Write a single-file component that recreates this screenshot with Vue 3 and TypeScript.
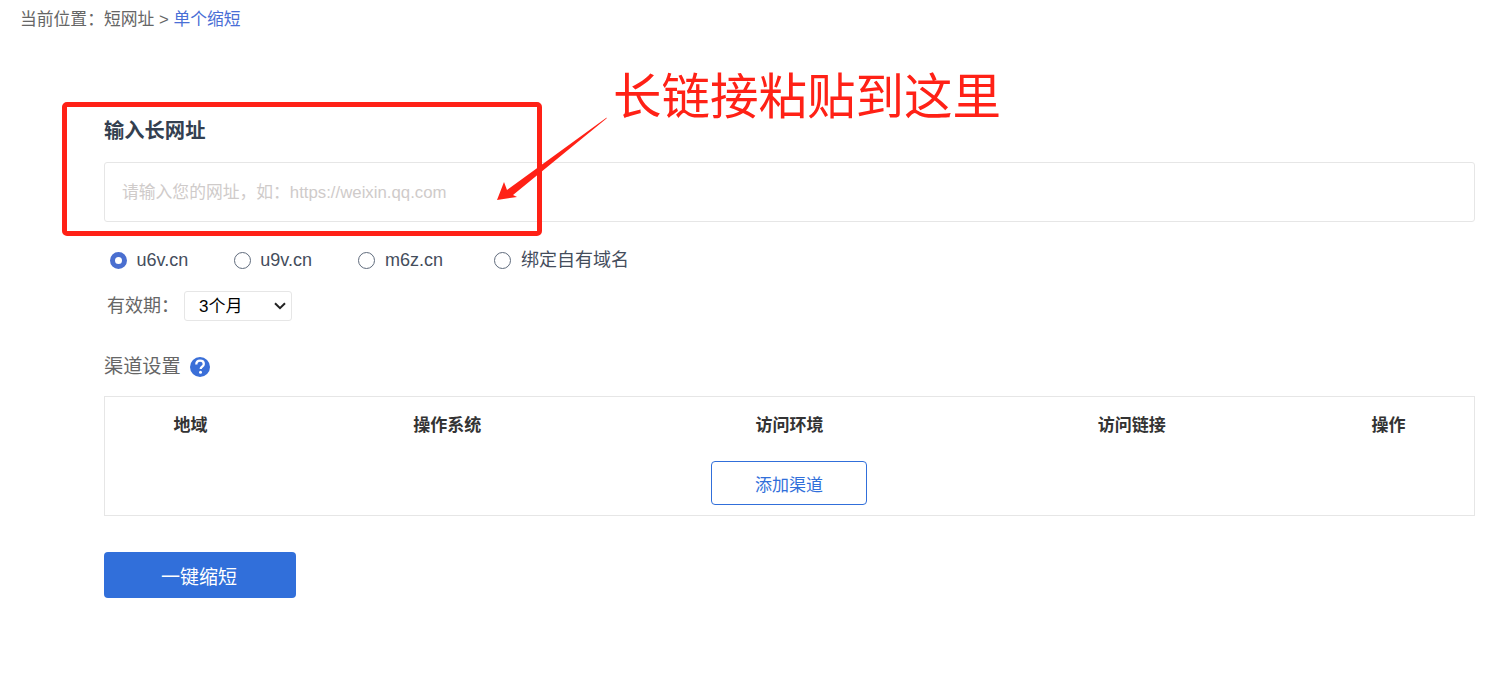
<script setup lang="ts">
const domains: { label: string; checked: boolean }[] = [
  { label: 'u6v.cn', checked: true },
  { label: 'u9v.cn', checked: false },
  { label: 'm6z.cn', checked: false },
  { label: '绑定自有域名', checked: false },
]
const columns: string[] = ['地域', '操作系统', '访问环境', '访问链接', '操作']
</script>

<template>
  <div class="page">
    <div class="crumbs">当前位置：短网址 &gt; <a class="current">单个缩短</a></div>

    <main class="form">
      <h2 class="title">输入长网址</h2>
      <div class="url-box">请输入您的网址，如：https://weixin.qq.com</div>

      <div class="radios">
        <label v-for="d in domains" :key="d.label" class="radio">
          <span class="dot" :class="{ on: d.checked }"></span>
          <span>{{ d.label }}</span>
        </label>
      </div>

      <div class="expiry">
        <span class="expiry-label">有效期：</span>
        <div class="select-wrap">
          <select class="expiry-select">
            <option>3个月</option>
          </select>
          <svg class="chevron" viewBox="0 0 12 8" width="12" height="8">
            <path d="M1 1.2l5 5 5-5" fill="none" stroke="#222" stroke-width="2" />
          </svg>
        </div>
      </div>

      <div class="channel-title">
        <span>渠道设置</span>
        <svg class="help" viewBox="0 0 20 20" width="20" height="20">
          <circle cx="10" cy="10" r="10" fill="#3a6fd8" />
          <path d="M6.3 7.5c0-2.4 1.6-3.8 3.8-3.8 2.2 0 3.7 1.3 3.7 3.2 0 1.5-.8 2.2-1.8 2.9-.9.6-1.3 1.1-1.3 2.2" fill="none" stroke="#fff" stroke-width="2.3" />
          <circle cx="10.5" cy="15.2" r="1.5" fill="#fff" />
        </svg>
      </div>

      <div class="channel-table">
        <div class="head">
          <div v-for="c in columns" :key="c" class="cell">{{ c }}</div>
        </div>
        <div class="add-row">
          <button class="add-btn" type="button">添加渠道</button>
        </div>
      </div>

      <button class="submit" type="button">一键缩短</button>
    </main>

    <div class="note-box"></div>
    <svg class="note-arrow" viewBox="0 0 120 90" width="120" height="90">
      <polygon points="118.7,1.5 118.5,2.5 25,79 29,81 9,84 16,66 19,74" fill="#ff2116" />
    </svg>
    <div class="note-text">长链接粘贴到这里</div>
  </div>
</template>

<style>
html, body { margin: 0; background: #fff; }
</style>

<style scoped>
.page {
  position: relative;
  height: 687px;
  overflow: hidden;
  font-family: "Liberation Sans", "Noto Sans CJK SC", sans-serif;
  color: #666;
}
.crumbs {
  padding: 9px 0 0 20px;
  font-size: 16.8px;
  line-height: 22px;
  color: #666;
}
.current { color: #4a6fd6; }
.form { padding: 0 18px 0 104px; }
.title {
  margin: 86px 0 0;
  font-size: 20.3px;
  line-height: 28px;
  font-weight: 700;
  color: #333f50;
}
.url-box {
  margin-top: 17px;
  height: 58px;
  padding-left: 17px;
  border: 1px solid #e6e6e6;
  border-radius: 3px;
  font-size: 16.8px;
  line-height: 60px;
  color: #cfcbca;
}
.radios {
  display: flex;
  margin-top: 26px;
  padding-left: 6px;
  font-size: 18px;
  line-height: 24px;
  color: #444d5c;
}
.radio { display: flex; align-items: center; gap: 9.5px; margin-right: 46.5px; }
.radio:nth-child(1) { margin-right: 45.5px; }
.radio:nth-child(3) { margin-right: 51.5px; }
.dot {
  width: 15px;
  height: 15px;
  border: 1px solid #5f6b7c;
  border-radius: 50%;
  background: #fff;
  box-sizing: content-box;
}
.dot.on { width: 7px; height: 7px; border: 5px solid #4a6fd0; }
.expiry { display: flex; align-items: center; margin-top: 19px; padding-left: 3px; }
.expiry-label { width: 77px; font-size: 18px; line-height: 28px; color: #666; }
.select-wrap { position: relative; width: 108px; height: 30px; }
.expiry-select {
  appearance: none;
  display: block;
  box-sizing: border-box;
  width: 108px;
  height: 30px;
  padding-left: 14px;
  border: 1px solid #e6e6e6;
  border-radius: 3px;
  background: #fff;
  color: #000;
  font-family: inherit;
  font-size: 17px;
}
.chevron { position: absolute; left: 90px; top: 11px; pointer-events: none; }
.channel-title {
  display: flex;
  align-items: center;
  gap: 9.5px;
  margin-top: 34px;
  font-size: 19.2px;
  line-height: 24px;
  color: #666;
}
.channel-table {
  margin-top: 17px;
  height: 120px;
  border: 1px solid #e6e6e6;
  box-sizing: border-box;
}
.head {
  display: grid;
  grid-template-columns: 12.5% 25% 25% 25% 12.5%;
  padding-top: 17px;
  font-size: 17px;
  line-height: 24px;
  font-weight: 700;
  color: #333;
  text-align: center;
}
.add-row { display: flex; justify-content: center; margin-top: 23px; padding-right: 1px; }
.add-btn {
  width: 156px;
  height: 44px;
  padding: 0;
  border: 1px solid #316fda;
  border-radius: 4px;
  background: #fff;
  color: #316fda;
  font-family: inherit;
  font-size: 17px;
}
.submit {
  display: block;
  margin-top: 36px;
  width: 192px;
  height: 46px;
  padding: 0 2px 0 0;
  border: 0;
  border-radius: 4px;
  background: #316fda;
  color: #fff;
  font-family: inherit;
  font-size: 19px;
}
.note-box {
  position: absolute;
  left: 62px;
  top: 102px;
  width: 480px;
  height: 134px;
  box-sizing: border-box;
  border: 5px solid #ff2116;
  border-radius: 5px;
}
.note-arrow { position: absolute; left: 488px; top: 116px; }
.note-text {
  position: absolute;
  left: 613px;
  top: 64px;
  font-size: 48.5px;
  line-height: 66px;
  color: #ff2116;
  white-space: nowrap;
}
</style>
